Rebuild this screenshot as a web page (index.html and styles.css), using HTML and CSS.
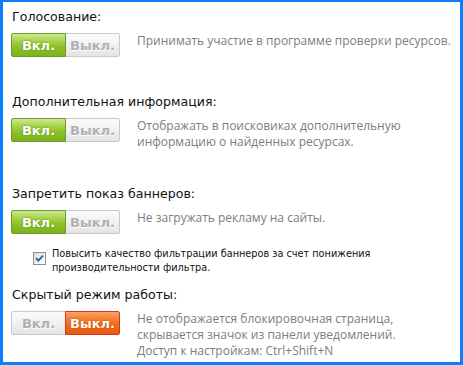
FILE: index.html
```html
<!DOCTYPE html>
<html lang="ru">
<head>
  <meta charset="UTF-8" />
  <title>Настройки</title>
  <link rel="stylesheet" href="styles.css">
</head>
<body>
  <div class="panel">

    <section class="option vote">
      <h2>Голосование:</h2>
      <div class="row">
        <div class="toggle">
          <span class="btn on-green">Вкл.</span>
          <span class="btn off">Выкл.</span>
        </div>
        <p class="desc">Принимать участие в программе проверки ресурсов.</p>
      </div>
    </section>

    <section class="option info">
      <h2>Дополнительная информация:</h2>
      <div class="row">
        <div class="toggle">
          <span class="btn on-green">Вкл.</span>
          <span class="btn off">Выкл.</span>
        </div>
        <p class="desc">Отображать в поисковиках дополнительную<br>информацию о найденных ресурсах.</p>
      </div>
    </section>

    <section class="option banners">
      <h2>Запретить показ баннеров:</h2>
      <div class="row">
        <div class="toggle">
          <span class="btn on-green">Вкл.</span>
          <span class="btn off">Выкл.</span>
        </div>
        <p class="desc">Не загружать рекламу на сайты.</p>
      </div>
      <label class="check">
        <svg class="box" width="13" height="13" viewBox="0 0 13 13">
          <defs>
            <linearGradient id="cb" x1="0" y1="0" x2="1" y2="1">
              <stop offset="0" stop-color="#dcdcd6"/>
              <stop offset="1" stop-color="#ffffff"/>
            </linearGradient>
          </defs>
          <rect x="0.5" y="0.5" width="12" height="12" fill="url(#cb)" stroke="#8e8f8f"/>
          <path d="M3 6.2 L5.3 8.6 L10 3.6" fill="none" stroke="#2f5ea8" stroke-width="1.8"/>
        </svg>
        <span>Повысить качество фильтрации баннеров за счет понижения<br>производительности фильтра.</span>
      </label>
    </section>

    <section class="option">
      <h2>Скрытый режим работы:</h2>
      <div class="row">
        <div class="toggle">
          <span class="btn off">Вкл.</span>
          <span class="btn on-orange">Выкл.</span>
        </div>
        <p class="desc">Не отображается блокировочная страница,<br>скрывается значок из панели уведомлений.<br>Доступ к настройкам: Ctrl+Shift+N</p>
      </div>
    </section>

  </div>
</body>
</html>
```

FILE: styles.css
```css
* {
  margin: 0;
  padding: 0;
  box-sizing: border-box;
}

body {
  background: #ffffff;
  font-family: 'DejaVu Sans', sans-serif;
}

.panel {
  width: 463px;
  height: 365px;
  border: 3px solid #0a80ff;
  border-top-width: 2px;
  padding: 6px 8px 0;
  background: #ffffff;
}

/* Option blocks */
.option h2 {
  font-size: 12.6px;
  font-weight: normal;
  line-height: 18px;
  color: #111;
  padding-left: 1px;
}

.option.vote {
  margin-bottom: 36px;
}

.option.info {
  margin-bottom: 35px;
}

.option.banners {
  margin-bottom: 11px;
}

.row {
  display: flex;
  gap: 17px;
  margin-top: 7px;
}

.desc {
  font-family: 'Open Sans', sans-serif;
  font-size: 12px;
  line-height: 16px;
  color: #7d7d7d;
}

/* Toggle buttons */
.toggle {
  display: flex;
  flex-shrink: 0;
}

.btn {
  width: 55px;
  height: 24px;
  display: flex;
  align-items: center;
  justify-content: center;
  font-size: 13px;
  font-weight: bold;
  border: 1px solid #c9c9c9;
  background: linear-gradient(#fbfbfb, #f1f1f1 50%, #e4e4e4);
  color: #b0b0b0;
  text-shadow: 0 1px 0 #ffffff;
}

.toggle .btn:first-child {
  border-radius: 2px 0 0 2px;
}

.toggle .btn:last-child {
  border-radius: 0 2px 2px 0;
  margin-left: -1px;
}

.btn.on-green {
  border-color: #6c9c22;
  background: linear-gradient(#cde895, #a3d244 35%, #8cc02a 60%, #7cb21c);
  color: #ffffff;
  text-shadow: 0 0 2px #5c8a14;
  position: relative;
}

.btn.on-orange {
  border-color: #d9362a;
  background: linear-gradient(#f8a36a, #f27a2a 40%, #ee6616 70%, #e85a10);
  color: #ffffff;
  text-shadow: 0 0 2px #b2400c;
  position: relative;
}

/* Checkbox */
.check {
  display: flex;
  align-items: flex-start;
  gap: 6px;
  margin-top: 13px;
  margin-left: 22px;
  font-family: 'DejaVu Sans Condensed', sans-serif;
  font-size: 10.8px;
  line-height: 14px;
  color: #111;
}

.check .box {
  flex-shrink: 0;
  margin-top: 5px;
}
```
